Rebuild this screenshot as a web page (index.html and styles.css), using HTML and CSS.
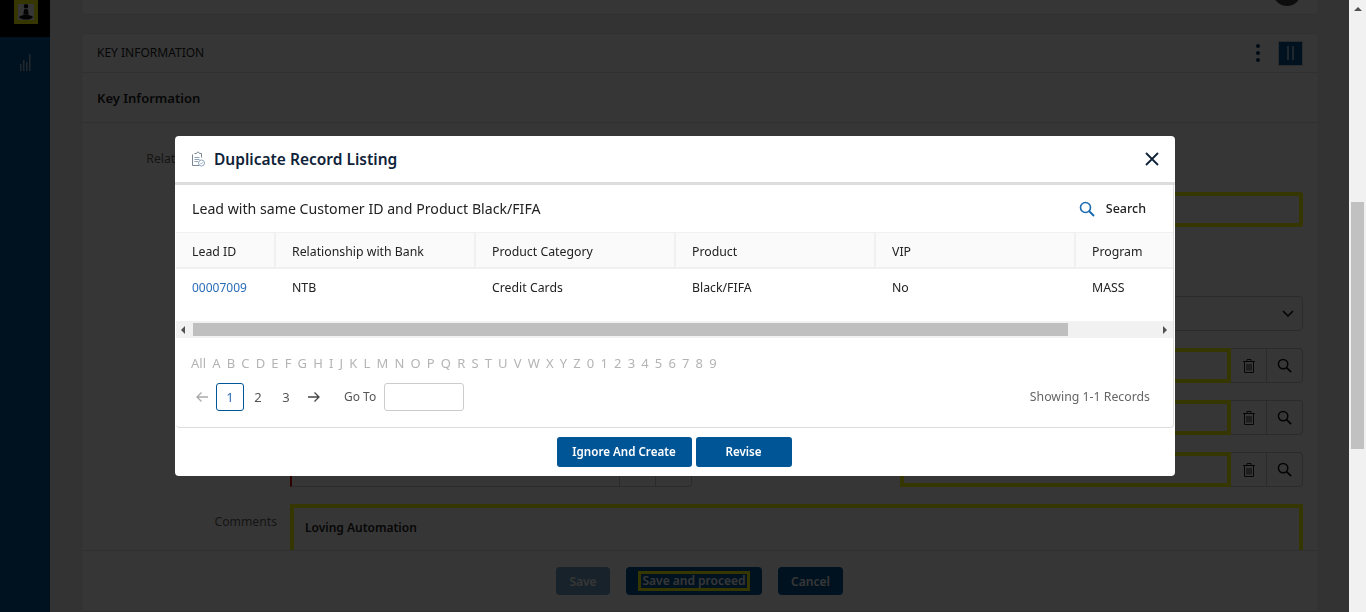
FILE: index.html
```html
<!DOCTYPE html>
<html lang="en">
<head>
<meta charset="utf-8">
<title>Duplicate Record Listing</title>
<link rel="stylesheet" href="styles.css">
</head>
<body>
<div class="app">
  <aside class="sidebar">
    <div class="logo-bar">
      <div class="logo">
        <svg width="16" height="16" viewBox="0 0 18 18"><path d="M9 0a2.600 2.600 0 1 1 0 5.200A2.600 2.600 0 0 1 9 0zM6.800 6h4.400l.8 6H6zM1 14.500c2-1.500 4-2 8-2s6 .5 8 2c-2 2-4 3-8 3s-6-1-8-3z"/></svg>
      </div>
    </div>
    <div class="side-icon">
      <svg width="11" height="17" viewBox="0 0 11 17"><g fill="#fff" opacity=".6"><rect x="0" y="10" width="1.500" height="7"/><rect x="3" y="6" width="1.500" height="11"/><rect x="6" y="8" width="1.500" height="9"/><rect x="9" y="0" width="1.500" height="17"/></g></svg>
    </div>
  </aside>
  <main class="main">
    <section class="top-card"><span class="avatar"></span></section>
    <section class="card">
      <header class="card-head">
        <span class="card-title">KEY INFORMATION</span>
        <span class="kebab"><i></i><i></i><i></i></span>
        <span class="pause"><i></i><i></i></span>
      </header>
      <h2 class="section-title">Key Information</h2>
      <div class="form">
        <div class="row row-first">
          <label class="lbl">Relationship with Bank</label>
          <div class="col-l"></div>
          <div class="col-r"><div class="inp yellow"></div></div>
        </div>
        <div class="row row-select">
          <div class="lbl"></div><div class="col-l"></div>
          <div class="col-r"><div class="inp select"><svg width="12" height="8" viewBox="0 0 12 8"><path d="M1 1l5 5 5-5" fill="none" stroke="#000" stroke-width="1.500"/></svg></div></div>
        </div>
        <div class="row">
          <div class="lbl"></div><div class="col-l"></div>
          <div class="col-r group"><div class="inp yellow"></div><span class="ib"><svg class="tr" viewBox="0 0 12 14"><path d="M0 2.500h12M4 2.500V.5h4v2M1.500 2.500v11h9v-11M4 5v6.500M6 5v6.500M8 5v6.500" fill="none" stroke="#222" stroke-width="1"/></svg></span><span class="ib"><svg class="mg" viewBox="0 0 16 16"><circle cx="6.500" cy="6.500" r="5" fill="none" stroke="#111" stroke-width="1.600"/><path d="M10 10l5 5" stroke="#111" stroke-width="2"/></svg></span></div>
        </div>
        <div class="row">
          <div class="lbl"></div><div class="col-l"></div>
          <div class="col-r group"><div class="inp yellow"></div><span class="ib"><svg class="tr" viewBox="0 0 12 14"><path d="M0 2.500h12M4 2.500V.5h4v2M1.500 2.500v11h9v-11M4 5v6.500M6 5v6.500M8 5v6.500" fill="none" stroke="#222" stroke-width="1"/></svg></span><span class="ib"><svg class="mg" viewBox="0 0 16 16"><circle cx="6.500" cy="6.500" r="5" fill="none" stroke="#111" stroke-width="1.600"/><path d="M10 10l5 5" stroke="#111" stroke-width="2"/></svg></span></div>
        </div>
        <div class="row">
          <div class="lbl"></div>
          <div class="col-l group"><div class="inp red"></div><span class="ib"></span><span class="ib"></span></div>
          <div class="col-r group"><div class="inp yellow"></div><span class="ib"><svg class="tr" viewBox="0 0 12 14"><path d="M0 2.500h12M4 2.500V.5h4v2M1.500 2.500v11h9v-11M4 5v6.500M6 5v6.500M8 5v6.500" fill="none" stroke="#222" stroke-width="1"/></svg></span><span class="ib"><svg class="mg" viewBox="0 0 16 16"><circle cx="6.500" cy="6.500" r="5" fill="none" stroke="#111" stroke-width="1.600"/><path d="M10 10l5 5" stroke="#111" stroke-width="2"/></svg></span></div>
        </div>
        <div class="row row-comments">
          <label class="lbl">Comments</label>
          <div class="textarea">Loving Automation</div>
        </div>
      </div>
      <footer class="actions">
        <button class="btn disabled">Save</button>
        <button class="btn focus"><span>Save and proceed</span></button>
        <button class="btn cancel">Cancel</button>
      </footer>
    </section>
  </main>
  <div class="page-scroll">
    <span class="arrow-up"></span>
    <span class="page-thumb"></span>
  </div>
</div>

<div class="overlay"></div>

<div class="modal">
  <header class="modal-head">
    <svg class="doc" width="14" height="16" viewBox="0 0 14 16"><g fill="none" stroke="#7d8794" stroke-width="1"><path d="M3.500 2.500h2l1-1.500h1l1 1.500h2v4"/><path d="M1.500 3.500v11h7"/></g><path d="M3.500 6.500h5M3.500 8.500h5M3.500 10.500h3.500" stroke="#8fa3bb"/><circle cx="10.500" cy="12" r="3" fill="#fff" stroke="#8fa3bb"/><path d="M9.300 12l1 1 1.500-1.800" fill="none" stroke="#8fa3bb" stroke-width=".8"/></svg>
    <h1 class="modal-title">Duplicate Record Listing</h1>
    <svg class="close" width="14" height="14" viewBox="0 0 14 14"><path d="M1 1l12 12M13 1L1 13" stroke="#0f2238" stroke-width="1.800" fill="none"/></svg>
  </header>
  <div class="panel">
    <div class="toolbar">
      <span class="tb-text">Lead with same Customer ID and Product Black/FIFA</span>
      <span class="search">
        <svg width="16" height="16" viewBox="0 0 16 16"><circle cx="6.500" cy="6.500" r="5" fill="none" stroke="#1b6bb0" stroke-width="1.600"/><path d="M10 10l5 5" stroke="#1b6bb0" stroke-width="2"/></svg>
        <span>Search</span>
      </span>
    </div>
    <div class="table">
      <div class="tr-row th">
        <span class="c c1">Lead ID</span><span class="c">Relationship with Bank</span><span class="c">Product Category</span><span class="c">Product</span><span class="c">VIP</span><span class="c cl">Program</span>
      </div>
      <div class="tr-row td">
        <span class="c c1"><a class="link">00007009</a></span><span class="c">NTB</span><span class="c">Credit Cards</span><span class="c">Black/FIFA</span><span class="c">No</span><span class="c cl">MASS</span>
      </div>
    </div>
    <div class="hscroll">
      <span class="tri-l"></span>
      <span class="h-thumb"></span>
      <span class="tri-r"></span>
    </div>
    <div class="alpha">
      <span>All</span><span>A</span><span>B</span><span>C</span><span>D</span><span>E</span><span>F</span><span>G</span><span>H</span><span>I</span><span>J</span><span>K</span><span>L</span><span>M</span><span>N</span><span>O</span><span>P</span><span>Q</span><span>R</span><span>S</span><span>T</span><span>U</span><span>V</span><span>W</span><span>X</span><span>Y</span><span>Z</span><span>0</span><span>1</span><span>2</span><span>3</span><span>4</span><span>5</span><span>6</span><span>7</span><span>8</span><span>9</span>
    </div>
    <div class="pager">
      <svg class="parr" width="14" height="12" viewBox="0 0 14 12"><path d="M13 6H2M6.500 1.500L2 6l4.500 4.500" fill="none" stroke="#aaa" stroke-width="1.300"/></svg>
      <span class="pg active">1</span>
      <span class="pg">2</span>
      <span class="pg">3</span>
      <svg class="parr" width="14" height="12" viewBox="0 0 14 12"><path d="M1 6h11M7.500 1.500L12 6l-4.500 4.500" fill="none" stroke="#444" stroke-width="1.300"/></svg>
      <span class="goto">Go To</span>
      <span class="goto-box"></span>
      <span class="records">Showing 1-1 Records</span>
    </div>
  </div>
  <footer class="modal-foot">
    <button class="mbtn wide">Ignore And Create</button>
    <button class="mbtn narrow">Revise</button>
  </footer>
</div>
</body>
</html>
```
FILE: styles.css
```css
* { box-sizing: border-box; }
html, body { margin: 0; height: 612px; overflow: hidden; }
body { font-family: "Noto Sans", "Liberation Sans", sans-serif; font-size: 13px; color: #222; background: #f0f0f0; }

.app { display: flex; height: 612px; }
.sidebar { width: 50px; flex: none; background: #005596; display: flex; flex-direction: column; }
.logo-bar { height: 37px; background: #000; display: flex; justify-content: center; align-items: flex-start; }
.logo { width: 24px; height: 24px; border: 4px solid #ff0; background: #fff; display: flex; align-items: center; justify-content: center; margin-left: 1px; overflow: hidden; }
.logo svg { width: 16px; height: 16px; }
.logo path { fill: #111; }
.side-icon { display: flex; justify-content: center; padding-top: 17px; }

.main { flex: 1; min-width: 0; padding: 0 30px 0 31px; display: flex; flex-direction: column; overflow: hidden; }
.top-card { height: 15px; flex: none; background: #fff; border: 1px solid #e4e4e4; border-top: 0; border-radius: 0 0 3px 3px; position: relative; margin-bottom: 18px; overflow: visible; }
.avatar { position: absolute; right: 17px; bottom: 8px; width: 28px; height: 28px; border-radius: 50%; background: #000; opacity: .75; }
.card { flex: 1; background: #fff; border: 1px solid #e4e4e4; border-radius: 3px 3px 0 0; display: flex; flex-direction: column; min-height: 0; }
.card-head { height: 39px; flex: none; display: flex; align-items: center; padding: 0 15px; border-bottom: 1px solid #e4e4e4; }
.card-title { flex: 1; font-size: 12px; color: #222; padding-bottom: 2px; }
.kebab { display: flex; flex-direction: column; gap: 3px; margin-right: 18px; }
.kebab i { width: 4px; height: 4px; border-radius: 50%; background: #003a66; }
.pause { width: 25px; height: 25px; background: #005596; border: 1px solid #d0d0d0; display: flex; justify-content: center; align-items: center; gap: 3px; }
.pause i { width: 2px; height: 14px; background: #fff; opacity: .6; }
.section-title { margin: 0; height: 50px; flex: none; line-height: 51px; padding-left: 15px; font-size: 13px; font-weight: 600; color: #222; border-bottom: 1px solid #e4e4e4; }

.form { flex: 1; min-height: 0; overflow: hidden; padding: 0 15px 0 0; }
.row { display: flex; margin-bottom: 17px; height: 35px; }
.row-first { height: 104px; margin-bottom: 0; }
.row-first .col-r { padding-top: 69px; }
.row-first .lbl { padding-top: 27px; }
.row-select { margin-top: 69px; }
.lbl { width: 195px; flex: none; text-align: right; font-size: 12.2px; color: #666; white-space: nowrap; }
.col-l { width: 402px; flex: none; margin: 0 208px 0 13px; }
.col-r { flex: 1; min-width: 0; }
.group { display: flex; }
.inp { flex: 1; height: 35px; border: 1px solid #ccc; border-radius: 4px; display: flex; justify-content: flex-end; align-items: center; padding-right: 8px; }
.yellow { border: 4px solid #ff0; border-radius: 0; }
.row-first .yellow { border-radius: 3px; }
.red { border: 1px solid #ccc; border-left: 2px solid #d00; border-radius: 0; }
.ib { width: 36px; height: 35px; flex: none; border: 1px solid #ccc; border-left: 0; display: flex; align-items: center; justify-content: center; }
.ib:last-child { border-radius: 0 4px 4px 0; }
.tr { width: 12px; height: 14px; }
.mg { width: 15px; height: 15px; }
.row-comments { height: 60px; margin: 0; }
.row-comments .lbl { padding-top: 9px; }
.textarea { margin-left: 13px; flex: 1; height: 60px; border: 4px solid #ff0; border-bottom: 0; padding: 11px 11px; font-weight: 600; font-size: 12px; color: #222; }

.actions { height: 61px; flex: none; border-top: 1px solid #e4e4e4; display: flex; justify-content: center; align-items: flex-start; gap: 16px; padding-top: 16px; padding-right: 1px; background: #fff; }
.btn { height: 28px; border: 0; border-radius: 4px; background: #005596; color: #fff; font: 600 12px "Noto Sans", sans-serif; padding: 0; }
.btn.disabled { opacity: .55; width: 54px; }
.btn.focus { width: 136px; }
.btn.cancel { width: 65px; }
.btn.focus span { display: inline-block; border: 3px solid #ff0; line-height: 14px; padding: 0 1px; }

.page-scroll { width: 17px; flex: none; background: #f1f1f1; position: relative; z-index: 20; }
.arrow-up { position: absolute; top: 7px; left: 5px; border: 4px solid transparent; border-top: 0; border-bottom: 4px solid #505050; }
.page-thumb { position: absolute; left: 2px; top: 202px; width: 13px; height: 247px; background: #c1c1c1; }

.overlay { position: fixed; top: 0; left: 0; right: 17px; bottom: 0; background: rgba(0,0,0,.79); z-index: 10; }

.modal { position: fixed; left: 175px; top: 136px; width: 1000px; height: 340px; background: #fff; border-radius: 4px; z-index: 30; display: flex; flex-direction: column; }
.modal-head { height: 49px; flex: none; display: flex; align-items: center; padding: 0 16px; border-bottom: 3px solid #ddd; }
.doc { margin-right: 9px; }
.modal-title { flex: 1; margin: 0; font-size: 15.5px; font-weight: 600; color: #0f2238; }

.panel { margin: 0 1px; height: 243px; flex: none; border: 1px solid #ddd; border-top: 0; border-left: 0; border-radius: 0 0 4px 4px; display: flex; flex-direction: column; }
.toolbar { height: 47px; flex: none; display: flex; align-items: center; justify-content: space-between; padding: 0 27px 0 16px; }
.tb-text { font-size: 14.15px; color: #222; }
.search { display: flex; align-items: center; gap: 11px; font-size: 12.5px; font-weight: 500; color: #222; }

.table { flex: none; }
.tr-row { display: flex; }
.th { height: 37px; background: #fafafa; border-top: 1px solid #f0f0f0; border-bottom: 2px solid #f0f0f0; }
.th .c { padding-top: 2px; }
.td { height: 52px; }
.c { width: 200px; flex: none; padding-left: 16px; font-size: 12.3px; color: #222; display: flex; align-items: center; white-space: nowrap; }
.th .c { border-right: 2px solid #f0f0f0; }
.th .cl { border-right: 0; }
.td .c { padding-bottom: 16px; }
.c1 { width: 100px; }
.cl { width: 98px; }
.link { color: #2b6cb8; font-size: 12px; }

.hscroll { height: 17px; flex: none; background: #f1f1f1; position: relative; }
.h-thumb { position: absolute; left: 17px; top: 2px; width: 875px; height: 13px; background: #bfbfbf; }
.tri-l { position: absolute; left: 5px; top: 5px; border: 4px solid transparent; border-left: 0; border-right: 4px solid #505050; }
.tri-r { position: absolute; right: 6px; top: 5px; border: 4px solid transparent; border-right: 0; border-left: 4px solid #505050; }

.alpha { display: flex; gap: 6.17px; padding: 16px 0 0 15px; height: 45px; flex: none; font-size: 13px; color: #b4b4b4; }
.pager { display: flex; align-items: center; padding: 0 23px 0 19px; height: 28px; flex: none; }
.parr { flex: none; }
.pg { width: 28px; height: 28px; display: flex; align-items: center; justify-content: center; font-size: 13px; color: #555; }
.pg.active { border: 1px solid #005596; border-radius: 3px; color: #2b6cb8; margin-left: 7px; }
.pg + .parr { margin-left: 7px; }
.goto { font-size: 12px; color: #555; margin: 0 8px 2px 23px; }
.goto-box { width: 80px; height: 28px; border: 1px solid #ccc; border-radius: 3px; }
.records { margin: 0 0 2px auto; font-size: 12.3px; color: #666; }

.modal-foot { flex: 1; display: flex; justify-content: center; gap: 4px; padding: 9px 2px 0 0; }
.mbtn { height: 30px; border: 0; border-radius: 3px; background: #005596; color: #fff; font: 600 11.6px "Noto Sans", sans-serif; padding: 0 0 2px; }
.wide { width: 135px; }
.narrow { width: 96px; }
```
